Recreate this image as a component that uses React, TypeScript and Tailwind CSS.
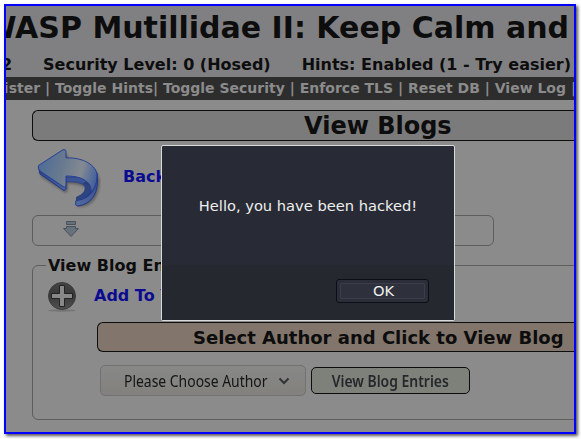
import React from "react";

function BackArrow() {
  return (
    <svg width="64" height="60" viewBox="0 0 64 60" className="shrink-0">
      <defs>
        <linearGradient id="face" gradientUnits="userSpaceOnUse" x1="2" y1="12" x2="60" y2="28">
          <stop offset="0" stopColor="#4d6c98" />
          <stop offset="0.4" stopColor="#697a8f" />
          <stop offset="0.72" stopColor="#848a92" />
          <stop offset="1" stopColor="#42609d" />
        </linearGradient>
        <linearGradient id="side" x1="0" y1="0" x2="1" y2="1">
          <stop offset="0" stopColor="#283f7e" />
          <stop offset="1" stopColor="#4a65a2" />
        </linearGradient>
        <linearGradient id="curl" x1="0" y1="1" x2="1" y2="0">
          <stop offset="0" stopColor="#536c9e" />
          <stop offset="1" stopColor="#344d8e" />
        </linearGradient>
        <filter id="soft" x="-20%" y="-20%" width="140%" height="140%">
          <feGaussianBlur stdDeviation="1" />
        </filter>
      </defs>
      <path fillRule="evenodd" d="M2 20L4 28L28 44L31 42V35C40 35 48 37 51 41C49 46 42 48 40 50L41 58C53 59 63 50 63 31C60 18 46 13 31 12V5Z" fill="#4a4a4a" opacity=".6" filter="url(#soft)" />
      <path d="M1.500 17L3 25L27 41.500L29 40V31L16 24Z" fill="url(#side)" stroke="#22378c" strokeLinejoin="round" />
      <path d="M29 33C38 32 46 34 49 38L54 34L46 28L29 28Z" fill="#3a5494" stroke="#263d88" strokeWidth=".8" />
      <path d="M46 34C51 40 47 45 39 49V56L52 51L57 37L53 31Z" fill="#283d78" />
      <path d="M60 24C60 38 55 50 39 51.500L38.500 55.500Q39 57 41 57C53 55 60 47 60.500 33Z" fill="url(#curl)" stroke="#22378c" strokeLinejoin="round" />
      <path d="M39 51.500V48C47 45 50 40 46 35C49 34 53 36 54 39C54 46 47 51 39 51.500Z" fill="#2d4480" />
      <path d="M1.500 16.500L25.500 1Q29 -.5 29 3V9C42 8 58 14 60 25C60 34 58 39 54 43C55 34 47 27 29 27V36Q29 39 26 37.500L3 22Q.5 19 1.500 16.500Z" fill="url(#face)" stroke="#273f96" strokeLinejoin="round" />
    </svg>
  );
}

function HintArrow() {
  return (
    <svg width="18" height="18" viewBox="0 0 18 18" fill="#66717b" stroke="#49535e" strokeWidth="1">
      <path d="M4.500 1.500H13.500V4.500H4.500Z" />
      <path d="M4.500 6.500H13.500V8.500H16.500L9 16.500L1.500 8.500H4.500Z" />
    </svg>
  );
}

function AddIcon() {
  return (
    <svg width="32" height="32" viewBox="0 0 32 32" className="shrink-0">
      <defs>
        <linearGradient id="disc" x1="0" y1="0" x2="0" y2="1">
          <stop offset="0" stopColor="#444544" />
          <stop offset=".45" stopColor="#373837" />
          <stop offset="1" stopColor="#505150" />
        </linearGradient>
      </defs>
      <ellipse cx="16" cy="29.500" rx="14" ry="1.200" fill="#747474" />
      <circle cx="16" cy="15" r="13.500" fill="url(#disc)" stroke="#3b3c3b" />
      <path d="M13.500 4.500H18.500V12.500H26.500V17.500H18.500V25.500H13.500V17.500H5.500V12.500H13.500Z" fill="#888" stroke="#222" />
    </svg>
  );
}

function AlertDialog() {
  return (
    <div className="absolute left-[161px] top-[145px] flex h-[176px] w-[294px] flex-col rounded-[2px] border border-[#d8dada] bg-[#282b35] text-[14.67px] text-[#eeeeee]">
      <div className="flex h-[119px] items-center justify-center whitespace-nowrap">
        <span>Hello, you have been hacked!</span>
      </div>
      <div className="flex flex-1 items-start justify-end bg-[#25282f] pr-[25px] pt-[14px]">
        <button className="h-6 w-[93px] rounded-[3px] border border-[#0d0e13] bg-[#2b2d38] p-[3px]">
          <span className="flex h-full items-center justify-center rounded-[1px] border border-[#3b3d49] bg-[#2e303c] pl-0.5">OK</span>
        </button>
      </div>
    </div>
  );
}

export default function App() {
  return (
    <div className="relative h-[439px] w-[581px] overflow-hidden bg-white pl-1 pt-1 font-['DejaVu_Sans',sans-serif] text-[#0d0d0d]">
      <main className="h-[430px] w-[572px] overflow-hidden border-2 border-[#0000ff] bg-[#8b8b8b] shadow-[2px_2px_3px_#555]">
        <header className="h-[71px] bg-[#808082]">
          <h1 className="flex h-[42px] items-center justify-end whitespace-nowrap pr-[5px] text-[30px] font-bold">
            OWASP Mutillidae II: Keep Calm and
          </h1>
          <div className="flex h-[29px] items-center justify-end gap-[31px] whitespace-nowrap pr-[3px] pt-[5px] text-base font-bold">
            <span>Version: 2.11.2</span>
            <span>Security Level: 0 (Hosed)</span>
            <span>Hints: Enabled (1 - Try easier)</span>
          </div>
        </header>
        <nav className="flex h-[23px] items-center justify-end whitespace-nowrap bg-[#2d2d2d] text-[14px] font-bold text-[#8b8b8b]">
          <span className="-mr-0.5">Login/Register | Toggle Hints| Toggle Security | Enforce TLS | Reset DB | View Log |</span>
        </nav>
        <section className="pl-[26px] pt-[10px]">
          <h2 className="flex h-[31px] items-center rounded-l-md border border-r-0 border-[#0d0d0d] bg-[#7b7b7b] pl-[271px] text-2xl font-bold">
            <span className="whitespace-nowrap">View Blogs</span>
          </h2>
          <div className="flex h-[74px] items-center pl-[5px] pt-0.5">
            <BackArrow />
            <a className="ml-[22px] pb-[5px] text-base font-bold text-[#0b0b91]">Back</a>
          </div>
          <div className="flex h-[31px] w-[462px] items-center rounded-md border border-[#5d5d5d] pb-1 pl-[29px]">
            <HintArrow />
          </div>
          <fieldset className="-mr-2 mt-[7px] h-[167px] rounded-md border border-[#5d5d5d] pl-[13px]">
            <legend className="h-6 whitespace-nowrap px-0.5 pt-px text-base font-bold leading-6">View Blog Entries</legend>
            <div className="mt-1 flex h-[32px] items-center">
              <AddIcon />
              <a className="ml-4 whitespace-nowrap pb-0.5 text-base font-bold text-[#0b0b91]">Add To Your Blog</a>
            </div>
            <div className="ml-[51px] mt-[9px] flex h-[30px] items-center rounded-l-md border border-r-0 border-[#0d0d0d] bg-[#82756b] pl-[95px] text-[18px] font-bold">
              <span className="whitespace-nowrap">Select Author and Click to View Blog</span>
            </div>
            <div className="ml-[54px] mt-[13px] flex items-center gap-[5px] font-['Noto_Sans',sans-serif] text-base">
              <button className="flex h-[31px] w-[206px] items-center rounded-[5px] border border-[#72716f] bg-gradient-to-b from-[#888886] to-[#82817e] pl-[23px] text-[#151515]">
                <span className="w-[154px] text-left">
                  <span className="inline-block origin-left scale-x-[0.87] whitespace-nowrap">Please Choose Author</span>
                </span>
                <svg width="12" height="8" viewBox="0 0 12 8" fill="none" stroke="#303437" strokeWidth="2">
                  <path d="M1.500 1.500L6 6L10.500 1.500" />
                </svg>
              </button>
              <button className="flex h-[27px] w-[159px] items-center justify-center rounded-[5px] border border-[#0d0d0d] bg-[#7e807a] font-semibold text-[#25282b]">
                <span className="inline-block scale-x-[0.87] whitespace-nowrap">View Blog Entries</span>
              </button>
            </div>
          </fieldset>
        </section>
      </main>
      <AlertDialog />
    </div>
  );
}
